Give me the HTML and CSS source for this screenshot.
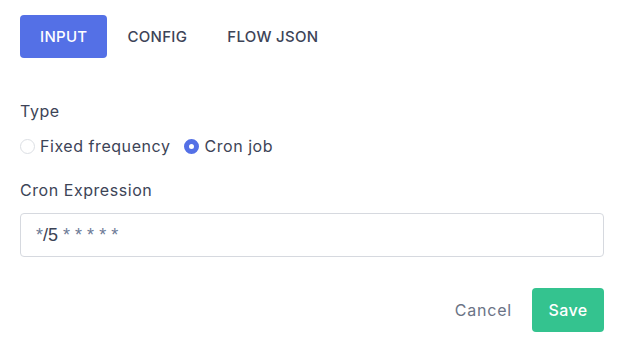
FILE: index.html
```html
<!DOCTYPE html>
<html>
<head>
<meta charset="utf-8">
<link rel="stylesheet" href="styles.css">
</head>
<body>
<div class="panel">
  <div class="tabs">
    <button class="tab active">INPUT</button>
    <button class="tab">CONFIG</button>
    <button class="tab">FLOW JSON</button>
  </div>
  <div class="field type-field">
    <div class="label">Type</div>
    <div class="radios">
      <label class="radio"><span class="dot"></span><span class="rtext">Fixed frequency</span></label>
      <label class="radio checked"><span class="dot"></span><span class="rtext">Cron job</span></label>
    </div>
  </div>
  <div class="field cron-field">
    <div class="label">Cron Expression</div>
    <div class="editor"><span class="line"><span class="tok">*</span><span class="num">/5</span> <span class="tok">*</span> <span class="tok">*</span> <span class="tok">*</span> <span class="tok">*</span> <span class="tok">*</span></span></div>
  </div>
  <div class="actions">
    <button class="cancel">Cancel</button>
    <button class="save">Save</button>
  </div>
</div>
</body>
</html>
```
FILE: styles.css
```css
* { box-sizing: border-box; }
html, body { margin: 0; padding: 0; background: #fff; }
body { font-family: "Inter", "Open Sans", sans-serif; color: #3d4457; }
.panel { padding: 15px 19px 0 20px; }
.tabs { display: flex; }
.tab {
  font-family: inherit;
  font-size: 15px;
  font-weight: 500;
  letter-spacing: 0.3px;
  line-height: 19px;
  padding: 12px 20px;
  border: 0;
  border-radius: 4px;
  background: transparent;
  color: #3d4457;
  cursor: pointer;
}
.tab.active { background: #5470e6; color: #fff; }
.field { display: flex; flex-direction: column; }
.type-field { margin-top: 43px; }
.label { font-size: 16px; letter-spacing: 0.55px; line-height: 20px; color: #3d4457; }
.radios { display: flex; gap: 14px; margin-top: 15px; }
.radio { display: flex; align-items: center; gap: 5px; font-size: 16px; letter-spacing: 0.55px; line-height: 20px; color: #3d4457; }
.dot { width: 15px; height: 15px; border-radius: 50%; border: 1px solid #dcdfe4; background: #fff; }
.radio.checked .dot { border: 5px solid #5470e6; }
.cron-field { margin-top: 24px; }
.editor {
  margin-top: 13px;
  height: 44px;
  border: 1px solid #d6d9df;
  border-radius: 4px;
  padding: 0 15px;
  display: flex;
  align-items: center;
  font-family: "Liberation Sans", sans-serif;
  font-size: 18px;
  color: #3b4255;
}
.line { white-space: pre; }
.tok { color: #6c7a96; }
.num { color: #3b4255; }
.actions { display: flex; justify-content: flex-end; align-items: center; gap: 20px; margin-top: 31px; }
.cancel { font-family: inherit; font-size: 16px; letter-spacing: 0.8px; background: none; border: 0; color: #6b7386; padding: 0; }
.save {
  font-family: inherit;
  font-size: 16px;
  font-weight: 500;
  letter-spacing: 0.4px;
  color: #fff;
  background: #34c38f;
  border: 0;
  border-radius: 4px;
  height: 44px;
  padding: 0;
  width: 72px;
}
```
